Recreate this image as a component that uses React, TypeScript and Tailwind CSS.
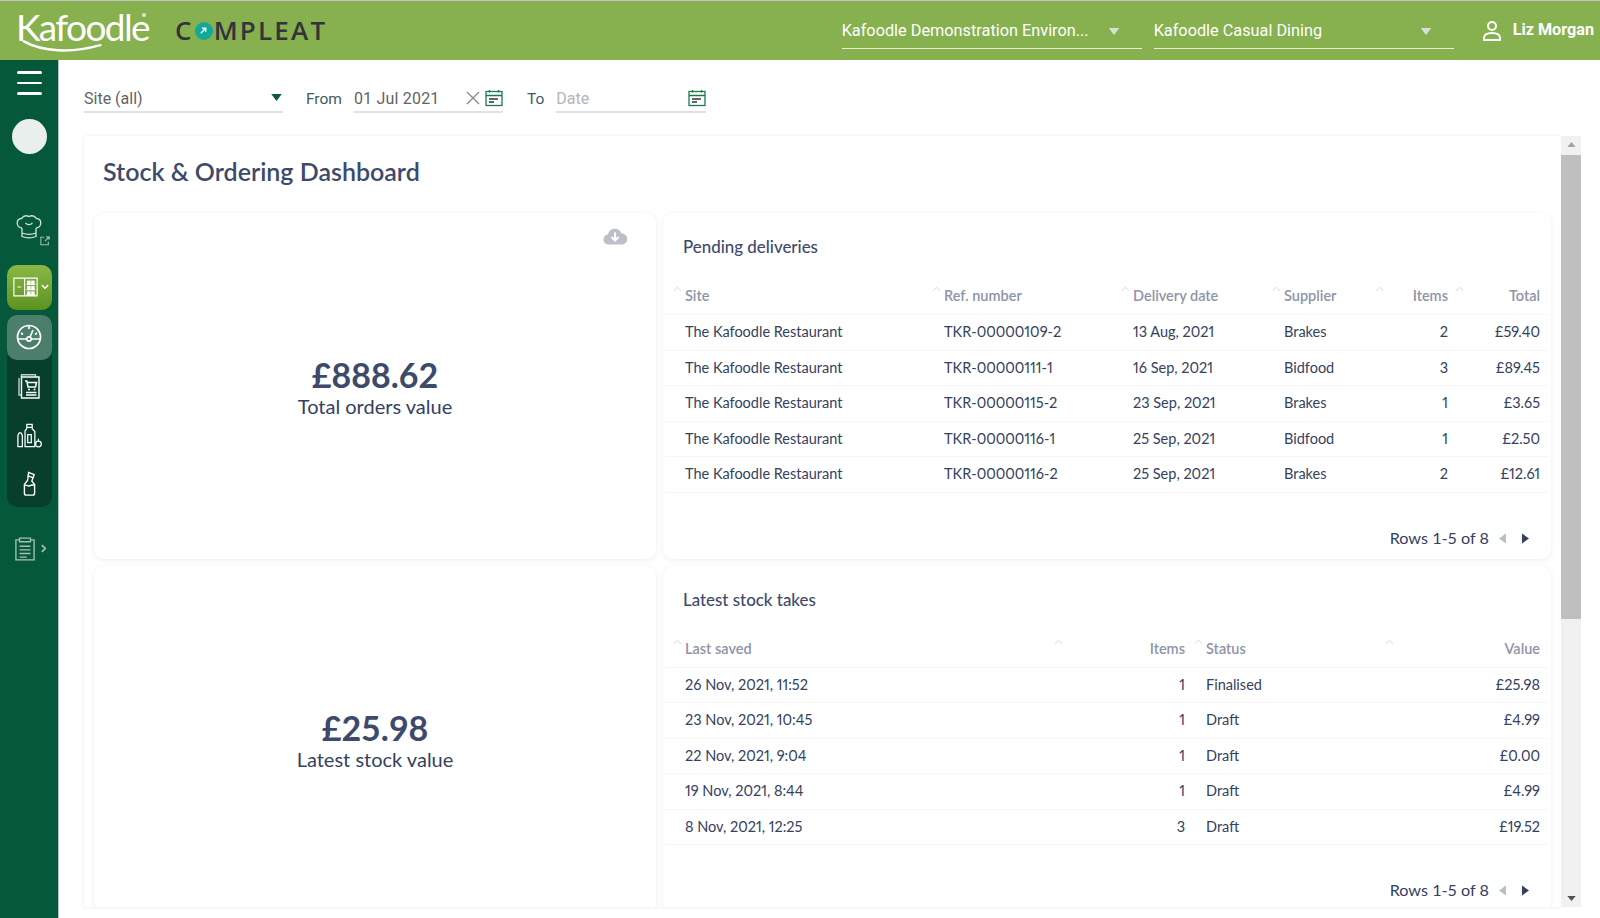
import React from "react";

const Caret = ({ cls }: { cls: string }) => (
  <svg viewBox="0 0 12 8" className={cls}><path d="M0 0h12L6 8z" fill="currentColor" /></svg>
);

const SortUp = () => (
  <svg viewBox="0 0 10 6" className="w-[9px] h-[6px] text-[#dfe2e8]"><path d="M1 5l4-4 4 4" fill="none" stroke="currentColor" strokeWidth="1.2" /></svg>
);

const Calendar = () => (
  <svg viewBox="0 0 18 18" className="w-[18px] h-[18px] text-[#1b7a50]" fill="none" stroke="currentColor" strokeWidth="1.3">
    <rect x="1" y="2.5" width="16" height="14" />
    <path d="M1 6.5h16M4.5 1v2.5M13.5 1v2.5" />
    <path d="M4 10h9M4 13h5" stroke="#333" />
  </svg>
);

const pending = [
  ["The Kafoodle Restaurant", "TKR-00000109-2", "13 Aug, 2021", "Brakes", "2", "£59.40"],
  ["The Kafoodle Restaurant", "TKR-00000111-1", "16 Sep, 2021", "Bidfood", "3", "£89.45"],
  ["The Kafoodle Restaurant", "TKR-00000115-2", "23 Sep, 2021", "Brakes", "1", "£3.65"],
  ["The Kafoodle Restaurant", "TKR-00000116-1", "25 Sep, 2021", "Bidfood", "1", "£2.50"],
  ["The Kafoodle Restaurant", "TKR-00000116-2", "25 Sep, 2021", "Brakes", "2", "£12.61"],
];
const stock = [
  ["26 Nov, 2021, 11:52", "1", "Finalised", "£25.98"],
  ["23 Nov, 2021, 10:45", "1", "Draft", "£4.99"],
  ["22 Nov, 2021, 9:04", "1", "Draft", "£0.00"],
  ["19 Nov, 2021, 8:44", "1", "Draft", "£4.99"],
  ["8 Nov, 2021, 12:25", "3", "Draft", "£19.52"],
];

type Col = { label: string; w: string; right?: boolean; pr?: string; arrow?: string };

const DataTable = ({ cols, rows }: { cols: Col[]; rows: string[][] }) => (
  <table className="w-full table-fixed border-collapse font-['Lato',sans-serif] text-[14.5px] proportional-nums">
    <colgroup>{cols.map((c) => <col key={c.label} className={c.w} />)}</colgroup>
    <thead>
      <tr className="h-[36px] border-b border-[#f6f6f8]">
        {cols.map((c) => (
          <th key={c.label} className={`font-semibold text-[#8e94a8] pl-[20px] ${c.pr ?? "pr-[11px]"} ${c.right ? "text-right" : "text-left"}`}>
            <div className="flex items-center relative">
              <span className={`absolute top-[1px] ${c.arrow ?? "left-[-12px]"}`}><SortUp /></span>
              <span className={c.right ? "ml-auto" : ""}>{c.label}</span>
            </div>
          </th>
        ))}
      </tr>
    </thead>
    <tbody>
      {rows.map((r, i) => (
        <tr key={i} className="h-[35.5px] border-b border-[#f6f6f8] text-[#34415f]">
          {r.map((v, j) => (
            <td key={j} className={`pl-[20px] ${cols[j].pr ?? "pr-[11px]"} ${cols[j].right ? "text-right" : ""}`}>{v}</td>
          ))}
        </tr>
      ))}
    </tbody>
  </table>
);

const Pager = () => (
  <div className="flex items-center justify-end pr-[20px] gap-[10px] text-[16.2px] text-[#34415f] font-['Lato',sans-serif]">
    <span>Rows 1-5 of 8</span>
    <svg viewBox="0 0 7 10" className="w-[7px] h-[11px] text-[#b9bdc9]"><path d="M7 0v10L0 5z" fill="currentColor" /></svg>
    <svg viewBox="0 0 7 10" className="w-[7px] h-[11px] ml-[6px] text-[#34415f]"><path d="M0 0v10l7-5z" fill="currentColor" /></svg>
  </div>
);

const Card = ({ children, cls }: { children: React.ReactNode; cls: string }) => (
  <div className={`bg-white rounded-[10px] shadow-[0_1px_5px_rgba(40,50,80,0.09)] ${cls}`}>{children}</div>
);

const Select = ({ label, w }: { label: string; w: string }) => (
  <div className={`${w} h-[37px] border-b border-[#e4ecd8] flex items-center pr-[22px] pt-[2px] text-[#fff] text-[16.3px]`}>
    <span className="flex-1">{label}</span>
    <Caret cls="w-[12px] h-[7px] text-[#d8dfd4]" />
  </div>
);

const icon = "fill-none stroke-white";

export default function App() {
  return (
    <div className="w-[1600px] h-[918px] overflow-hidden bg-white flex flex-col font-['Roboto',sans-serif]">
      <header className="h-[60px] shrink-0 bg-[#87b04f] border-t border-[#c4c4c4] flex items-center">
        <div className="relative w-[130px] ml-[16px] h-[44px] text-white font-['Lato',sans-serif] font-normal text-[37px] leading-[36px] tracking-[-1.6px]">
          Kafoodle
          <span className="absolute left-[126px] top-[4px] w-[4px] h-[4px] rounded-full bg-[#dfe8cf]" />
          <svg viewBox="0 0 90 14" className="absolute left-[6px] top-[31px] w-[84px] h-[14px]">
            <path d="M2 1c20 11 50 13 82 4" fill="none" stroke="white" strokeWidth="2.6" strokeLinecap="round" />
          </svg>
        </div>
        <div className="ml-[29px] flex items-center text-[#33343a] font-['Open_Sans',sans-serif] font-semibold text-[26px] tracking-[2.2px]">
          <span>C</span>
          <span className="w-[18px] h-[18px] rounded-full bg-[#12a99a] flex items-center justify-center mx-[1px]">
            <svg viewBox="0 0 10 10" className="w-[9px] h-[9px]"><path d="M2 8l5-5M3.5 2.5h4v4" fill="none" stroke="white" strokeWidth="1.5" /></svg>
          </span>
          <span>MPLEAT</span>
        </div>
        <div className="ml-auto flex items-center">
          <Select label="Kafoodle Demonstration Environ..." w="w-[300px]" />
          <div className="w-[12px]" />
          <Select label="Kafoodle Casual Dining" w="w-[300px]" />
          <svg viewBox="0 0 24 24" className="ml-[26px] w-[24px] h-[24px] fill-none stroke-white" strokeWidth="2"><circle cx="12" cy="7" r="4" /><path d="M4 21v-2c0-3 3-5 8-5s8 2 8 5v2z" /></svg>
          <span className="ml-[9px] mr-[6px] text-white font-bold text-[16.2px]">Liz Morgan</span>
        </div>
      </header>

      <div className="flex-1 flex min-h-0">
        <aside className="w-[59px] shrink-0 bg-[#05593a] flex flex-col items-center pt-[11px] border-r border-[#b5c4bd]">
          <div className="flex flex-col gap-[8px] w-[25px]">
            <div className="h-[2.5px] bg-white rounded" />
            <div className="h-[2.5px] bg-white rounded" />
            <div className="h-[2.5px] bg-white rounded" />
          </div>
          <div className="mt-[24px] w-[35px] h-[35px] rounded-full bg-[#e8efec]" />
          <div className="mt-[49px] relative w-[44px] h-[44px] flex items-center justify-center">
            <svg viewBox="0 0 28 24" className="w-[28px] h-[25px] mt-[3px] ml-[-1px] fill-none stroke-[#d4e2dc]" strokeWidth="1.3">
              <path d="M7 13.500V22c4 1.500 10 1.500 14 0v-8.500M7 13.500C1 13 .5 4.500 6.500 4 9 .5 12 1 14 2c2-1 5-1.500 7.500 2 6 .5 5.500 9-.5 9.500M7 18.500c4 1.500 10 1.500 14 0M10.500 8.500c2 2 5 2 7 0" />
            </svg>
            <svg viewBox="0 0 12 12" className="absolute right-[1px] bottom-[1px] w-[10px] h-[10px] fill-none stroke-[#9fbcb0]" strokeWidth="1.3"><path d="M5 1.500H1v9h9V7M6 6l5-5M7.500 1H11v3.500" /></svg>
          </div>
          <div className="mt-[18px] w-[45px] h-[45px] rounded-[10px] bg-gradient-to-b from-[#8ab845] to-[#5c9320] flex items-center justify-center relative">
            <svg viewBox="0 0 28 22" className="w-[25px] h-[20px] fill-none stroke-white ml-[-8px]" strokeWidth="1.3">
              <path d="M1 1h26v20H1zM13 1v20M5 11h4" />
              <path d="M15 8h10M15 14h10M15 20h10" strokeWidth="1.500" />
              <path d="M16 4h3.500v4H16zM20.500 4H24v4h-3.500zM16 10h3.500v4H16zM20.500 10H24v4h-3.500zM16 16h3.500v4H16zM20.500 16H24v4h-3.500z" fill="white" strokeWidth="0.4" />
            </svg>
            <svg viewBox="0 0 10 7" className="absolute right-[3px] top-[19px] w-[8px] h-[6px] fill-none stroke-white" strokeWidth="1.8"><path d="M1 1l4 4 4-4" /></svg>
          </div>
          <div className="mt-[5px] w-[45px] rounded-[10px] bg-[#073f2c] flex flex-col items-center">
            <div className="w-[45px] h-[45px] rounded-[10px] bg-[#4b7f6c] flex items-center justify-center">
              <svg viewBox="0 0 26 26" className={`w-[26px] h-[26px] ${icon}`} strokeWidth="1.7">
                <circle cx="13" cy="13" r="11.5" /><circle cx="13" cy="15" r="2.200" /><path d="M2 15h9M15 15h9M14 13l3-7M5 9l2 1.500M13 2v3M21 9l-2 1.500" />
              </svg>
            </div>
            <div className="h-[49px] flex items-center justify-center mt-[2px]">
              <svg viewBox="0 0 22 25" className={`w-[22px] h-[25px] ${icon}`} strokeWidth="1.4">
                <path d="M3.500 3V.8h14V3M1 4v17h2" strokeOpacity=".75" />
                <path d="M3.500 3H21v21H3.500z" />
                <path d="M7 7h1.800l1.200 6h7.500l1-4.500H9.200" strokeWidth="1.500" />
                <circle cx="11" cy="15.500" r="1" fill="white" strokeWidth="0" />
                <circle cx="16.500" cy="15.500" r="1" fill="white" strokeWidth="0" />
                <path d="M8 18.500h10.500M8 21h10.500" strokeWidth="1.500" />
              </svg>
            </div>
            <div className="h-[49px] flex items-center justify-center">
              <svg viewBox="0 0 30 28" className={`w-[27px] h-[25px] ${icon}`} strokeWidth="1.4">
                <path d="M12 1.500h6v5l3 3v17H10V9l2-3zM12 5h6M13 13h4v9h-4zM2 14l1.500-3h2L7 14v12.500H2z" /><circle cx="25" cy="23.500" r="3.200" /><path d="M25 20v-2.500" />
              </svg>
            </div>
            <div className="h-[47px] flex items-center justify-center">
              <svg viewBox="0 0 14 27" className={`w-[13px] h-[25px] ${icon}`} strokeWidth="1.500">
                <path d="M6 1.500l6 2.500-2.500 7 3 3.500v9.500c0 1.500-1 2-2 2H3.500c-1 0-2-.5-2-2V14.500L5 10z" />
                <path d="M1.500 15.500c3-1 3.500 1.500 5.500.5s3-1.500 5.500-.5M5 5l6 2.500" />
              </svg>
            </div>
          </div>
          <div className="mt-[30px] flex items-center w-[36px] ml-[7px]">
            <svg viewBox="0 0 22 26" className="w-[20px] h-[24px] fill-none stroke-[#a5c0b3]" strokeWidth="1.5">
              <path d="M5 3H1v22h20V3h-4M5 1h12v4H5zM5 10h12M5 14h12M5 18h12M5 22h8" />
            </svg>
            <svg viewBox="0 0 7 10" className="ml-[6px] w-[6px] h-[9px] fill-none stroke-[#a5c0b3]" strokeWidth="2"><path d="M1 1l4 4-4 4" /></svg>
          </div>
        </aside>

        <main className="flex-1 min-w-0 flex flex-col pl-[25px] pr-[19px]">
          <div className="h-[76px] shrink-0 flex items-start pt-[21px] text-[16px]">
            <div className="w-[199px] h-[32px] border-b-2 border-[#e0e1e3] flex items-center pt-[5px] text-[#5f6368]">
              <span className="flex-1">Site (all)</span>
              <Caret cls="w-[11px] h-[7px] text-[#0b5a3a] mr-[1px] mb-[3px]" />
            </div>
            <span className="ml-[23px] h-[32px] flex items-center pt-[5px] text-[15.5px] text-[#3f5a63]">From</span>
            <div className="ml-[11px] w-[150px] h-[32px] border-b-2 border-[#e0e1e3] flex items-center pt-[5px] text-[#5f6368]">
              <span className="flex-1 pl-[1px] tracking-[0.2px]">01 Jul 2021</span>
              <svg viewBox="0 0 14 14" className="w-[14px] h-[14px] mr-[5px] mb-[2px] fill-none stroke-[#85888c]" strokeWidth="1.300"><path d="M1 1l12 12M13 1L1 13" /></svg>
              <span className="mb-[2px]"><Calendar /></span>
            </div>
            <span className="ml-[24px] h-[32px] flex items-center pt-[5px] text-[15.5px] text-[#3f5a63]">To</span>
            <div className="ml-[12px] w-[150px] h-[32px] border-b-2 border-[#e0e1e3] flex items-center pt-[5px] text-[#b3b5b8]">
              <span className="flex-1">Date</span>
              <span className="mb-[2px]"><Calendar /></span>
            </div>
          </div>

          <div className="h-[771px] flex min-h-0 shrink-0">
            <div className="flex-1 min-w-0 rounded-t-[4px] shadow-[0_0_3px_rgba(40,50,80,0.12)] overflow-hidden px-[10px]">
              <h1 className="h-[77px] pt-[18px] pl-[9px] text-[25px] leading-[34px] font-['Lato',sans-serif] font-semibold text-[#3d4a6b]">Stock &amp; Ordering Dashboard</h1>
              <div className="grid grid-cols-[562px_888px] gap-x-[7px] gap-y-[7px] grid-rows-[346px_346px]">
                <Card cls="relative flex flex-col items-center justify-center pt-[2px] font-['Lato',sans-serif]">
                  <svg viewBox="0 0 24 16" className="absolute right-[29px] top-[15px] w-[24px] h-[17px]">
                    <path d="M6 16a5 5 0 0 1-1-10 7 7 0 0 1 13.500-1A5.500 5.500 0 0 1 19 16z" fill="#bcbfca" />
                    <path d="M12 4v8M8.500 8.500l3.500 3.500 3.500-3.500" fill="none" stroke="white" strokeWidth="2" />
                  </svg>
                  <div className="text-[34px] leading-[38px] font-bold text-[#3d4a6b]">£888.62</div>
                  <div className="text-[20px] leading-[24px] text-[#34415f]">Total orders value</div>
                </Card>
                <Card cls="flex flex-col pt-[21px] px-[2px]">
                  <h2 className="pl-[18px] text-[16.9px] leading-[26px] font-medium text-[#3d4a6b] font-['Lato',sans-serif]">Pending deliveries</h2>
                  <div className="mt-[18.5px]">
                    <DataTable cols={[
                      { label: "Site", w: "w-[259px]" },
                      { label: "Ref. number", w: "w-[189px]" },
                      { label: "Delivery date", w: "w-[151px]" },
                      { label: "Supplier", w: "w-[88px]" },
                      { label: "Items", w: "w-[107px]", right: true, arrow: "left-[3px]" },
                      { label: "Total", w: "w-[90px]", right: true, pr: "pr-[9px]", arrow: "left-[-24px]" },
                    ]} rows={pending} />
                  </div>
                  <div className="mt-[33.5px]"><Pager /></div>
                </Card>
                <Card cls="flex flex-col items-center justify-center pt-[2px] font-['Lato',sans-serif]">
                  <div className="text-[34px] leading-[38px] font-bold text-[#3d4a6b]">£25.98</div>
                  <div className="text-[20px] leading-[24px] text-[#34415f]">Latest stock value</div>
                </Card>
                <Card cls="flex flex-col pt-[21px] px-[2px]">
                  <h2 className="pl-[18px] text-[16.9px] leading-[26px] font-medium text-[#3d4a6b] font-['Lato',sans-serif]">Latest stock takes</h2>
                  <div className="mt-[18px]">
                    <DataTable cols={[
                      { label: "Last saved", w: "w-[381px]" },
                      { label: "Items", w: "w-[140px]", right: true, pr: "pr-[1px]" },
                      { label: "Status", w: "w-[185px]" },
                      { label: "Value", w: "w-[178px]", right: true, pr: "pr-[9px]", arrow: "left-[-6px]" },
                    ]} rows={stock} />
                  </div>
                  <div className="mt-[33px]"><Pager /></div>
                </Card>
              </div>
            </div>
            <div className="w-[20px] shrink-0 bg-[#f1f1f1] flex flex-col items-center">
              <svg viewBox="0 0 10 6" className="w-[9px] h-[5px] mt-[6px] text-[#a3a3a3]"><path d="M0 6l5-6 5 6z" fill="currentColor" /></svg>
              <div className="mt-[8px] w-full h-[464px] bg-[#bfbfbf]" />
              <svg viewBox="0 0 10 6" className="w-[9px] h-[5px] mt-auto mb-[6px] text-[#505050]"><path d="M0 0l5 6 5-6z" fill="currentColor" /></svg>
            </div>
          </div>
        </main>
      </div>
    </div>
  );
}
